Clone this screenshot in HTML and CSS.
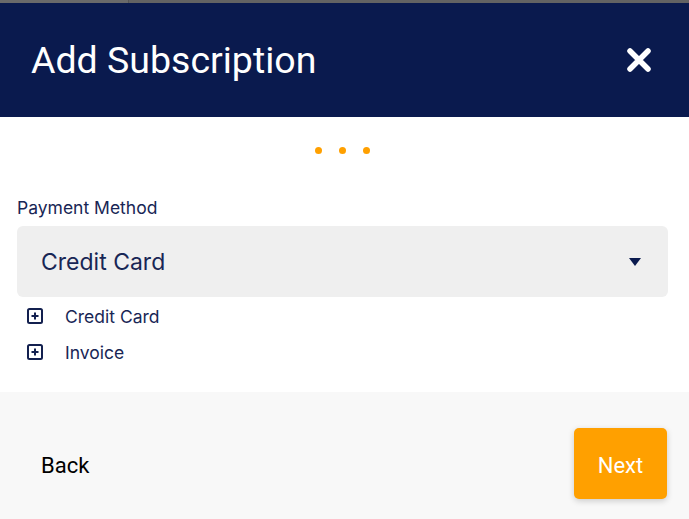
FILE: index.html
```html
<!DOCTYPE html>
<html lang="en">
<head>
<meta charset="utf-8">
<title>Add Subscription</title>
<link rel="stylesheet" href="styles.css">
</head>
<body>
<div class="topbar"><span class="topbar-left"></span><span class="topbar-right"></span></div>
<header class="header">
  <h1 class="title">Add Subscription</h1>
  <button class="close" aria-label="Close">
    <svg width="26" height="26" viewBox="0 0 26 26"><path d="M4 4 L22 22 M22 4 L4 22" stroke="#fff" stroke-width="5.5" stroke-linecap="round" fill="none"/></svg>
  </button>
</header>
<main class="content">
  <div class="dots"><span class="dot"></span><span class="dot"></span><span class="dot"></span></div>
  <label class="label">Payment Method</label>
  <div class="select">
    <span class="select-value">Credit Card</span>
    <svg class="caret" width="12" height="8" viewBox="0 0 12 8"><path d="M0 0 H12 L6 8 Z" fill="#0a1a4e"/></svg>
  </div>
  <ul class="options">
    <li class="option">
      <svg class="plus" width="16" height="16" viewBox="0 0 16 16"><rect x="1" y="1" width="14" height="14" rx="1.5" fill="none" stroke="#13204f" stroke-width="2"/><path d="M8 4.5 V11.5 M4.5 8 H11.5" stroke="#13204f" stroke-width="2"/></svg>
      <span>Credit Card</span>
    </li>
    <li class="option">
      <svg class="plus" width="16" height="16" viewBox="0 0 16 16"><rect x="1" y="1" width="14" height="14" rx="1.5" fill="none" stroke="#13204f" stroke-width="2"/><path d="M8 4.5 V11.5 M4.5 8 H11.5" stroke="#13204f" stroke-width="2"/></svg>
      <span>Invoice</span>
    </li>
  </ul>
</main>
<footer class="footer">
  <button class="back">Back</button>
  <button class="next">Next</button>
</footer>
</body>
</html>
```
FILE: styles.css
```css
* { box-sizing: border-box; }
html, body { margin: 0; padding: 0; }
body {
  width: 689px;
  height: 519px;
  overflow: hidden;
  background: #fff;
  font-family: Inter, "Noto Sans", sans-serif;
  color: #182655;
}
.topbar { display: flex; height: 3px; }
.topbar-left { width: 129px; background: #6a6a6a; border-right: 1px solid #555; }
.topbar-right { flex: 1; background: #636363; }
.header {
  height: 114px;
  background: #0a1a4e;
  display: flex;
  align-items: center;
  justify-content: space-between;
  padding: 0 37px 0 31px;
}
.title {
  margin: 0;
  font-family: Roboto, sans-serif;
  font-weight: 400;
  font-size: 37.5px;
  color: #fff;
}
.close {
  background: none;
  border: 0;
  padding: 0;
  display: flex;
  cursor: pointer;
}
.content {
  padding: 30px 21px 22px 17px;
}
.dots {
  display: flex;
  justify-content: center;
  gap: 17px;
  height: 7px;
}
.dot {
  width: 7px;
  height: 7px;
  border-radius: 50%;
  background: #ffa000;
}
.label {
  display: block;
  margin-top: 44px;
  font-size: 17.5px;
  line-height: 20px;
}
.select {
  margin-top: 8px;
  height: 71px;
  background: #efefef;
  border-radius: 6px;
  display: flex;
  align-items: center;
  justify-content: space-between;
  padding: 0 27px 0 24px;
}
.select-value {
  font-size: 23px;
}
.caret { margin-top: 1px; }
.options {
  list-style: none;
  margin: 1px 0 0;
  padding: 0;
}
.option {
  height: 36px;
  display: flex;
  align-items: center;
  gap: 22px;
  padding-left: 10px;
  font-size: 17.5px;
}
.plus { flex: none; }
.footer {
  height: 127px;
  background: #f8f8f8;
  display: flex;
  align-items: flex-start;
  justify-content: space-between;
  padding: 36px 22px 0 41px;
}
.back {
  background: none;
  border: 0;
  padding: 3px 0 0;
  height: 71px;
  font-family: Roboto, sans-serif;
  font-size: 22px;
  color: #000;
}
.next {
  width: 93px;
  height: 71px;
  border: 0;
  padding: 3px 0 0;
  border-radius: 5px;
  background: #ffa000;
  color: #fff;
  font-family: Roboto, sans-serif;
  font-size: 22px;
  box-shadow: 0 2px 6px rgba(0,0,0,0.18);
}
```
